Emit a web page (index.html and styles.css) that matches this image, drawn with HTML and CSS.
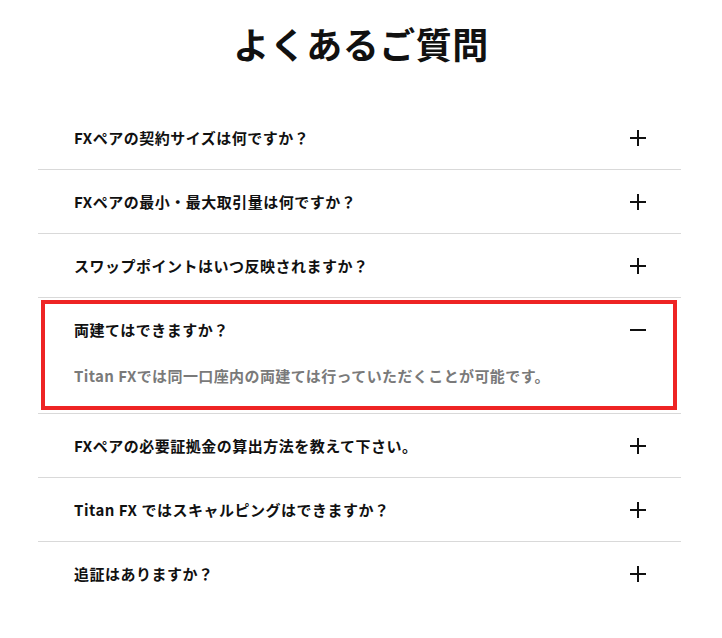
FILE: index.html
```html
<!DOCTYPE html>
<html lang="ja">
<head>
<meta charset="utf-8">
<title>よくあるご質問</title>
<link rel="stylesheet" href="styles.css">
</head>
<body>
<main class="faq">
  <h1 class="faq-title">よくあるご質問</h1>
  <ul class="faq-list">
    <li class="faq-item">
      <div class="faq-q"><span>FXペアの契約サイズは何ですか？</span><span class="icon plus"></span></div>
    </li>
    <li class="faq-item">
      <div class="faq-q"><span>FXペアの最小・最大取引量は何ですか？</span><span class="icon plus"></span></div>
    </li>
    <li class="faq-item">
      <div class="faq-q"><span>スワップポイントはいつ反映されますか？</span><span class="icon plus"></span></div>
    </li>
    <li class="faq-item open">
      <div class="faq-q"><span>両建てはできますか？</span><span class="icon minus"></span></div>
      <div class="faq-a">Titan FXでは同一口座内の両建ては行っていただくことが可能です。</div>
      <div class="highlight"></div>
    </li>
    <li class="faq-item">
      <div class="faq-q"><span>FXペアの必要証拠金の算出方法を教えて下さい。</span><span class="icon plus"></span></div>
    </li>
    <li class="faq-item">
      <div class="faq-q"><span>Titan FX ではスキャルピングはできますか？</span><span class="icon plus"></span></div>
    </li>
    <li class="faq-item">
      <div class="faq-q"><span>追証はありますか？</span><span class="icon plus"></span></div>
    </li>
  </ul>
</main>
</body>
</html>
```
FILE: styles.css
```css
* { box-sizing: border-box; }
html, body {
  margin: 0;
  padding: 0;
  background: #ffffff;
}
body {
  font-family: "Noto Sans CJK JP", "Noto Sans", sans-serif;
  color: #111111;
}
.faq {
  padding: 19px 41px 0 38px;
}
.faq-title {
  margin: 0;
  text-align: center;
  font-size: 36px;
  line-height: 48px;
  font-weight: 700;
  letter-spacing: 0.5px;
  padding-left: 3px;
}
.faq-list {
  list-style: none;
  margin: 39px 0 0;
  padding: 0;
}
.faq-item {
  position: relative;
  border-bottom: 1px solid #d9d9d9;
}
.faq-item:last-child {
  border-bottom: none;
}
.faq-q {
  height: 63px;
  display: flex;
  align-items: center;
  justify-content: space-between;
  padding: 0 35px 0 36px;
  font-size: 15px;
  font-weight: 700;
  line-height: 24px;
  letter-spacing: 0.5px;
}
.faq-a {
  padding: 3px 36px 25px;
  font-size: 15px;
  font-weight: 700;
  line-height: 24px;
  letter-spacing: 0.4px;
  color: #7a7a7a;
}
.icon {
  position: relative;
  width: 16px;
  height: 16px;
  flex: none;
}
.icon::before,
.icon::after {
  content: "";
  position: absolute;
  background: #111111;
}
.icon::before {
  left: 0;
  top: 7px;
  width: 16px;
  height: 2px;
}
.plus::after {
  left: 7px;
  top: 0;
  width: 2px;
  height: 16px;
}
.minus::after {
  display: none;
}
.highlight {
  position: absolute;
  top: 2px;
  left: 3px;
  right: 4px;
  bottom: 3px;
  border: 4px solid #ee2424;
  pointer-events: none;
}
```
